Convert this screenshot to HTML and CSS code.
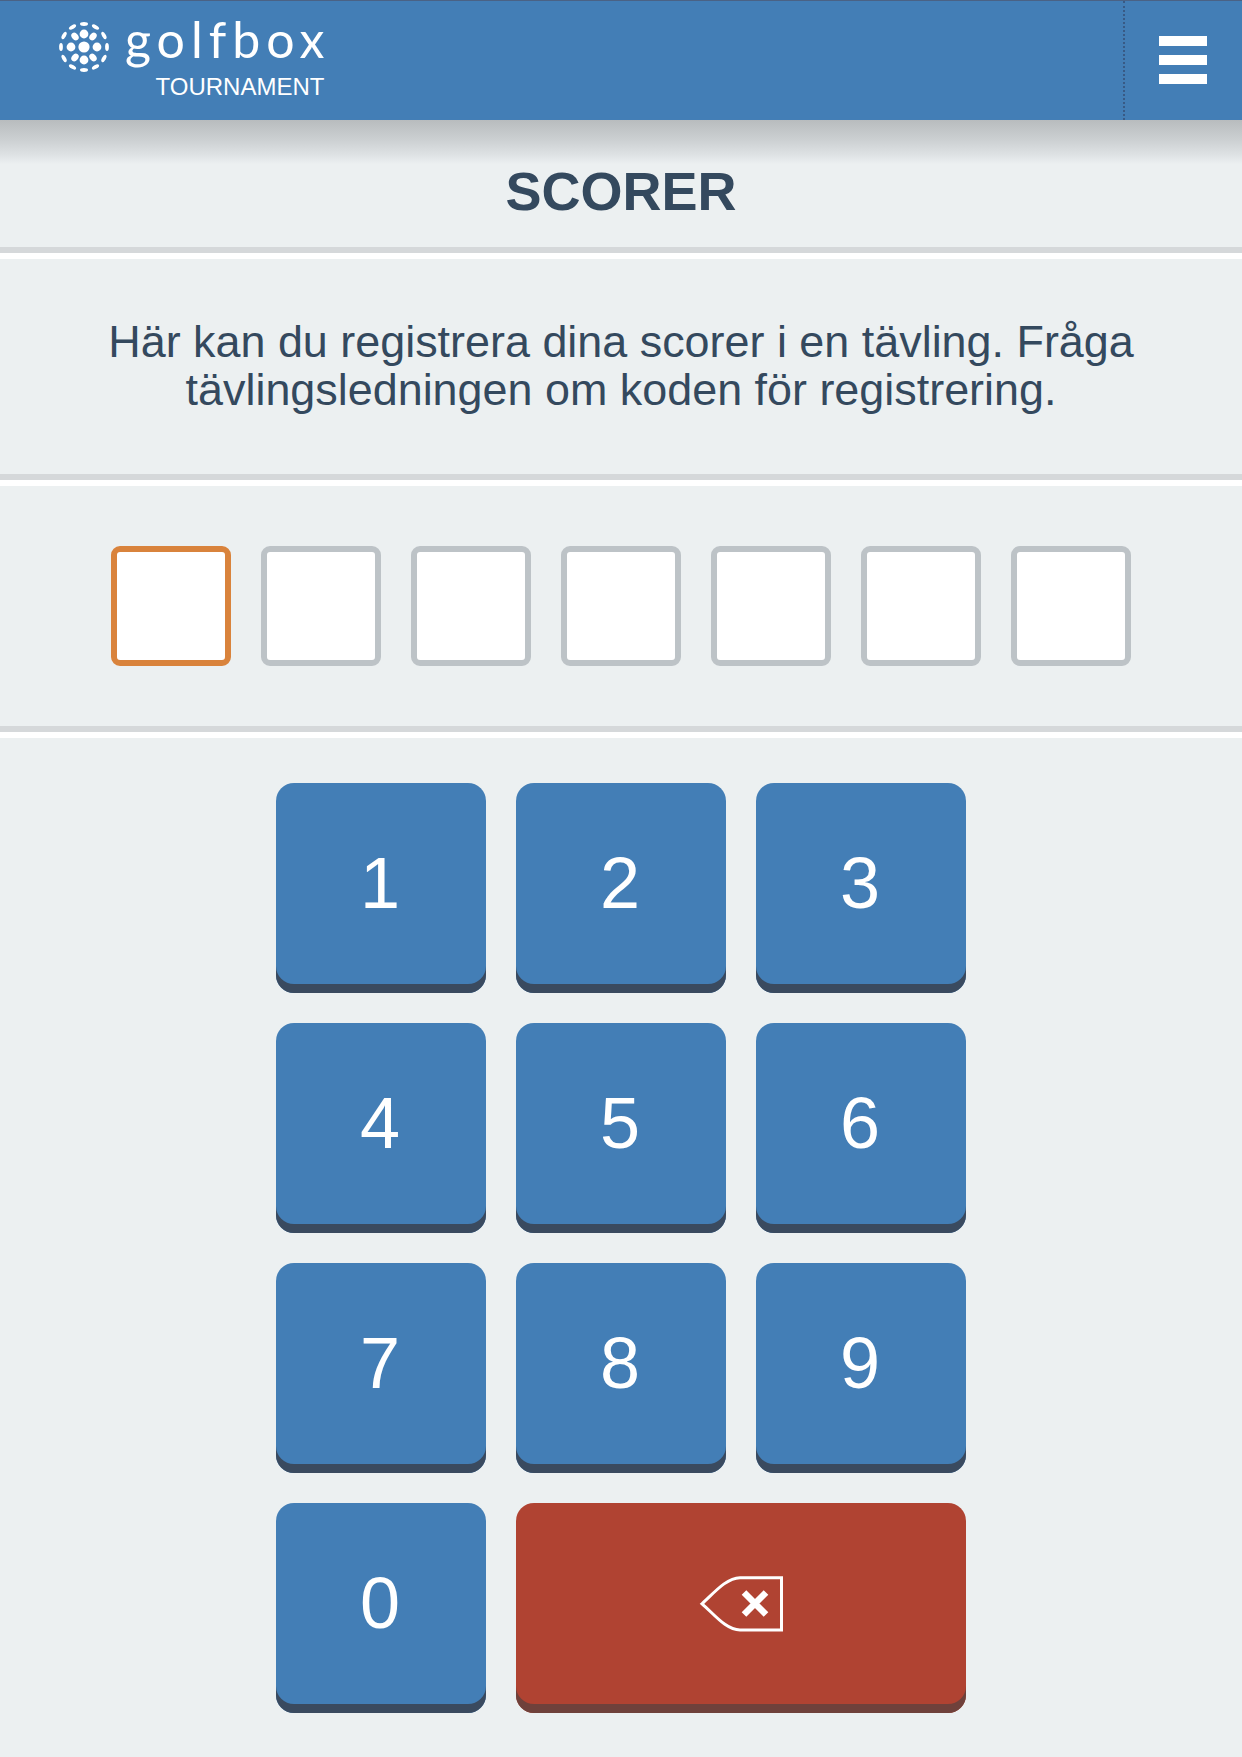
FILE: index.html
```html
<!DOCTYPE html>
<html lang="en">
<head>
  <meta charset="UTF-8" />
  <meta name="viewport" content="width=device-width, initial-scale=1.0"/>
  <title>GolfBox Tournament - Scorer</title>
  <link rel="stylesheet" href="styles.css">
</head>
<body>
  <header class="topbar">
    <a class="brand" href="#">
      <svg class="brand-ball" viewBox="-25 -25 50 50" aria-hidden="true">
        <circle r="5.6"/>
        <circle cx="0" cy="-13" r="4.4"/>
        <circle cx="0" cy="13" r="4.4"/>
        <circle cx="-13" cy="0" r="4.4"/>
        <circle cx="13" cy="0" r="4.4"/>
        <ellipse cx="-9" cy="-10.5" rx="3.2" ry="4.2" transform="rotate(-40 -9 -10.5)"/>
        <ellipse cx="9" cy="-10.5" rx="3.2" ry="4.2" transform="rotate(40 9 -10.5)"/>
        <ellipse cx="-9" cy="10.5" rx="3.2" ry="4.2" transform="rotate(40 -9 10.5)"/>
        <ellipse cx="9" cy="10.5" rx="3.2" ry="4.2" transform="rotate(-40 9 10.5)"/>
        <g class="brand-ball-rim">
          <ellipse cy="-23" rx="4" ry="1.9"/>
          <ellipse cy="-23" rx="4" ry="1.9" transform="rotate(30)"/>
          <ellipse cy="-23" rx="4" ry="1.9" transform="rotate(60)"/>
          <ellipse cy="-23" rx="4" ry="1.9" transform="rotate(90)"/>
          <ellipse cy="-23" rx="4" ry="1.9" transform="rotate(120)"/>
          <ellipse cy="-23" rx="4" ry="1.9" transform="rotate(150)"/>
          <ellipse cy="-23" rx="4" ry="1.9" transform="rotate(180)"/>
          <ellipse cy="-23" rx="4" ry="1.9" transform="rotate(210)"/>
          <ellipse cy="-23" rx="4" ry="1.9" transform="rotate(240)"/>
          <ellipse cy="-23" rx="4" ry="1.9" transform="rotate(270)"/>
          <ellipse cy="-23" rx="4" ry="1.9" transform="rotate(300)"/>
          <ellipse cy="-23" rx="4" ry="1.9" transform="rotate(330)"/>
        </g>
      </svg>
      <div class="brand-text">
        <span class="brand-name">golfbox</span>
        <span class="brand-sub">TOURNAMENT</span>
      </div>
    </a>
    <button class="menu-btn" aria-label="Meny">
      <span></span><span></span><span></span>
    </button>
  </header>

  <section class="page-title">
    <h1>SCORER</h1>
  </section>

  <section class="intro">
    <p>Här kan du registrera dina scorer i en tävling. Fråga tävlingsledningen om koden för registrering.</p>
  </section>

  <section class="code">
    <div class="code-box active"></div>
    <div class="code-box"></div>
    <div class="code-box"></div>
    <div class="code-box"></div>
    <div class="code-box"></div>
    <div class="code-box"></div>
    <div class="code-box"></div>
  </section>

  <section class="keypad">
    <button class="key">1</button>
    <button class="key">2</button>
    <button class="key">3</button>
    <button class="key">4</button>
    <button class="key">5</button>
    <button class="key">6</button>
    <button class="key">7</button>
    <button class="key">8</button>
    <button class="key">9</button>
    <button class="key">0</button>
    <button class="key key-delete" aria-label="Radera">
      <svg viewBox="0 0 86 58" width="86" height="58" aria-hidden="true">
        <path class="del-outline" d="M4 28.8 C16 18 28 3 42 2.7 H83.5 V55 H42 C28 55 16 39 4 28.8 Z"/>
        <path class="del-cross" d="M46 17.5 L68 39.5 M68 17.5 L46 39.5"/>
      </svg>
    </button>
  </section>
</body>
</html>
```

FILE: styles.css
```css
* {
  box-sizing: border-box;
}

body {
  margin: 0;
  background-color: #ecf0f1;
  color: #34495e;
  font-family: "Liberation Sans", Arial, sans-serif;
}

.topbar {
  height: 120px;
  display: flex;
  justify-content: space-between;
  background-color: #437eb6;
  border-top: 1px solid #4a6285;
}

.brand {
  display: flex;
  align-items: flex-start;
  padding: 21px 0 0 59px;
  color: #fff;
  text-decoration: none;
}

.brand-ball {
  width: 50px;
  height: 50px;
  fill: #fff;
}

.brand-text {
  display: flex;
  flex-direction: column;
  align-items: flex-end;
  margin-left: 16px;
}

.brand-name {
  font-family: "Lato", sans-serif;
  font-size: 50px;
  line-height: 34px;
  letter-spacing: 6px;
}

.brand-sub {
  margin: 17px 6px 0 0;
  font-size: 24px;
  line-height: 28px;
}

.menu-btn {
  width: 119px;
  display: flex;
  flex-direction: column;
  align-items: center;
  justify-content: center;
  gap: 9px;
  padding: 0 2px 2px 0;
  background: none;
  border: none;
  border-left: 2px dotted #385a85;
}

.menu-btn span {
  width: 48px;
  height: 10px;
  background-color: #fff;
}

.page-title {
  height: 133px;
  display: flex;
  align-items: center;
  justify-content: center;
  padding-top: 15px;
  background: linear-gradient(#b8bcbe, #ccd0d2 20px, #dde1e3 34px, #ecf0f1 44px);
  border-bottom: 6px solid #d5d8da;
}

.page-title h1 {
  margin: 0;
  font-size: 54px;
  line-height: 60px;
}

.intro {
  height: 227px;
  display: flex;
  align-items: center;
  justify-content: center;
  padding: 0 90px 2px;
  border-top: 6px solid #fff;
  border-bottom: 6px solid #d5d8da;
}

.intro p {
  margin: 0;
  font-size: 44.9px;
  line-height: 48px;
  text-align: center;
}

.code {
  height: 252px;
  display: flex;
  align-items: center;
  justify-content: center;
  gap: 30px;
  border-top: 6px solid #fff;
  border-bottom: 6px solid #d5d8da;
}

.code-box {
  width: 120px;
  height: 120px;
  background-color: #fff;
  border: 6px solid #bdc3c7;
  border-radius: 9px;
}

.code-box.active {
  border-color: #d9833c;
}

.keypad {
  display: grid;
  grid-template-columns: repeat(3, 210px);
  grid-auto-rows: 210px;
  gap: 30px;
  justify-content: center;
  padding-top: 45px;
  border-top: 6px solid #fff;
}

.key {
  display: flex;
  align-items: center;
  justify-content: center;
  padding: 0 2px 10px 0;
  background-color: #437eb6;
  color: #fff;
  border: none;
  border-radius: 18px;
  box-shadow: inset 0 -9px 0 #3a4a5f;
  font-family: inherit;
  font-size: 72px;
}

.key-delete {
  grid-column: span 2;
  padding: 0 0 9px;
  background-color: #b04332;
  box-shadow: inset 0 -9px 0 #6f413b;
}

.del-outline {
  fill: none;
  stroke: #fff;
  stroke-width: 3;
}

.del-cross {
  fill: none;
  stroke: #fff;
  stroke-width: 6.5;
}
```
